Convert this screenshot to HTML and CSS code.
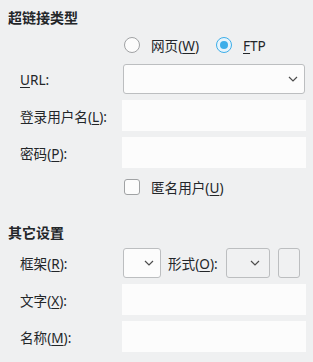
FILE: index.html
```html
<!DOCTYPE html>
<html>
  <head>
    <meta charset="UTF-8" />
    <title>超链接</title>
    <link rel="stylesheet" href="styles.css">
  </head>
  <body>
    <div class="panel">
      <h2 class="heading first">超链接类型</h2>
      <div class="form">
        <div></div>
        <div class="choice-row">
          <label class="radio"><span class="dot"></span><span>网页(<u>W</u>)</span></label>
          <label class="radio"><span class="dot on"></span><span><u>F</u>TP</span></label>
        </div>

        <div class="label"><span><u>U</u>RL:</span></div>
        <div class="combo wide">
          <svg class="chev" width="10" height="6" viewBox="0 0 10 6"><polyline points="1,1 5,5 9,1" fill="none" stroke="#4d4d4d" stroke-width="1.2"/></svg>
        </div>

        <div class="label"><span>登录用户名(<u>L</u>):</span></div>
        <div class="field"></div>

        <div class="label"><span>密码(<u>P</u>):</span></div>
        <div class="field"></div>

        <div></div>
        <div class="choice-row">
          <label class="check"><span class="box"></span><span>匿名用户(<u>U</u>)</span></label>
        </div>
      </div>

      <h2 class="heading second">其它设置</h2>
      <div class="form">
        <div class="label"><span>框架(<u>R</u>):</span></div>
        <div class="inline-row">
          <div class="combo small">
            <svg class="chev" width="10" height="6" viewBox="0 0 10 6"><polyline points="1,1 5,5 9,1" fill="none" stroke="#4d4d4d" stroke-width="1.2"/></svg>
          </div>
          <span class="inline-label">形式(<u>O</u>):</span>
          <div class="combo button-combo">
            <svg class="chev" width="10" height="6" viewBox="0 0 10 6"><polyline points="1,1 5,5 9,1" fill="none" stroke="#4d4d4d" stroke-width="1.2"/></svg>
          </div>
          <div class="button-small"></div>
        </div>

        <div class="label"><span>文字(<u>X</u>):</span></div>
        <div class="field"></div>

        <div class="label"><span>名称(<u>M</u>):</span></div>
        <div class="field"></div>
      </div>
    </div>
  </body>
</html>
```

FILE: styles.css
```css
body, html {
    margin: 0;
    padding: 0;
    background-color: #eff0f1;
    color: #232629;
    font-family: "Noto Sans", "Noto Sans CJK SC", sans-serif;
    font-size: 13.6px;
}

.panel {
    padding: 6px 8px 0 8px;
}

.heading {
    font-size: 14px;
    font-weight: bold;
    line-height: 23px;
    margin: 0;
}

.heading.first {
    margin-bottom: 3px;
}

.heading.second {
    margin-top: 21px;
    margin-bottom: 4px;
}

.form {
    display: grid;
    grid-template-columns: 102px 184px;
    row-gap: 6px;
    padding-left: 12px;
}

.label {
    display: flex;
    align-items: center;
    white-space: nowrap;
}

u {
    text-decoration: underline;
    text-underline-offset: 2px;
}

.choice-row {
    height: 26px;
    display: flex;
    align-items: center;
    gap: 17px;
    padding-left: 2px;
}

.radio, .check {
    display: flex;
    align-items: center;
    gap: 11px;
    white-space: nowrap;
}

.dot {
    width: 14px;
    height: 14px;
    border: 1px solid #a0a2a4;
    border-radius: 50%;
    background-color: #fcfcfc;
    position: relative;
}

.dot.on {
    border-color: #3daee9;
    background-color: #e6f4fc;
}

.dot.on::after {
    content: "";
    position: absolute;
    left: 3px;
    top: 3px;
    width: 8px;
    height: 8px;
    border-radius: 50%;
    background-color: #3daee9;
}

.box {
    width: 14px;
    height: 14px;
    border: 1px solid #a0a2a4;
    border-radius: 3px;
    background-color: #fcfcfc;
}

.field {
    height: 31px;
    background-color: #fcfcfc;
}

.combo {
    height: 28px;
    border: 1px solid #bcbec0;
    border-radius: 3px;
    background-color: #fcfcfc;
    display: flex;
    align-items: center;
    justify-content: flex-end;
    padding-right: 6px;
    flex-shrink: 0;
}

.combo.wide {
    margin: 0 1px;
}

.combo.small {
    width: 30px;
    margin-left: 1px;
}

.combo.button-combo {
    width: 33px;
    background-color: #f0f1f2;
    padding-right: 9px;
}

.chev {
    display: block;
}

.inline-row {
    display: flex;
    align-items: center;
    height: 30px;
}

.inline-label {
    margin: 0 8px 0 7px;
    white-space: nowrap;
    flex-shrink: 0;
}

.button-small {
    width: 20px;
    height: 28px;
    margin-left: 8px;
    border: 1px solid #bcbec0;
    border-radius: 3px;
    background-color: #f0f1f2;
    flex-shrink: 0;
}
```
